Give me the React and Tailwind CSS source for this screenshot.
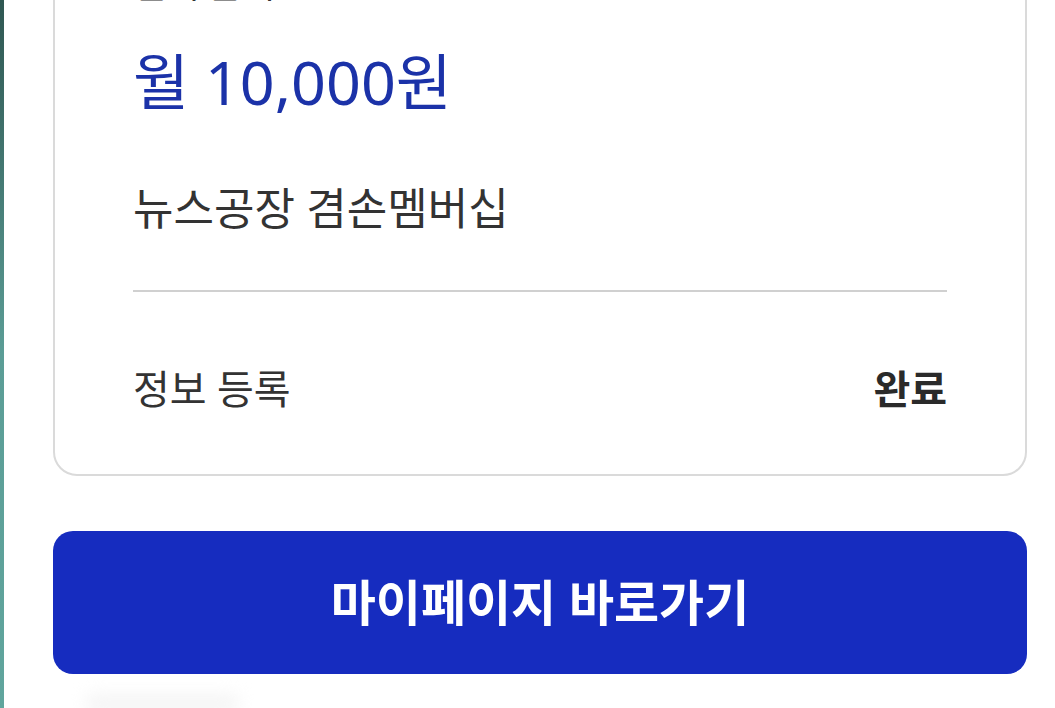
export default function App() {
  return (
    <div className="flex h-[708px] w-[1055px] overflow-hidden bg-white font-['Noto_Sans','Noto_Sans_CJK_KR',sans-serif] text-[#333333]">
      {/* left edge strip */}
      <div className="h-full w-[4px] shrink-0 bg-linear-to-b from-[#2f5752] via-[#5b9d96] to-[#60a59d]" />

      <div className="flex-1 pl-[49px] pr-[28px]">
        {/* membership card */}
        <div className="-mt-[42px] rounded-[24px] border-2 border-[#dadada] bg-white px-[78px]">
          <div className="flex h-[43px] items-end">
            <span className="text-[36px] leading-none">결제 금액</span>
          </div>
          <div className="flex h-[115px] items-center pt-[41px]">
            <span className="text-[61px] leading-none text-[#1b32a8]">월 10,000원</span>
          </div>
          <div className="flex h-[172px] items-center pt-[8px]">
            <span className="text-[44px] leading-none">뉴스공장 겸손멤버십</span>
          </div>
          <div className="h-[2px] bg-[#d0d0d0]" />
          <div className="flex h-[182px] items-center justify-between pt-[12px]">
            <span className="text-[40px] leading-none">정보 등록</span>
            <span className="text-[40px] font-bold leading-none text-[#2a2a2a]">완료</span>
          </div>
        </div>

        {/* action button */}
        <button className="mt-[55px] flex h-[143px] w-full items-center justify-center rounded-[20px] bg-[#162cbf]">
          <span className="text-[49px] font-bold leading-none text-white">마이페이지 바로가기</span>
        </button>

        <div className="ml-[32px] mt-[20px] h-[20px] w-[155px] rounded-full bg-[#f5f5f5] blur-sm" />
      </div>
    </div>
  );
}
